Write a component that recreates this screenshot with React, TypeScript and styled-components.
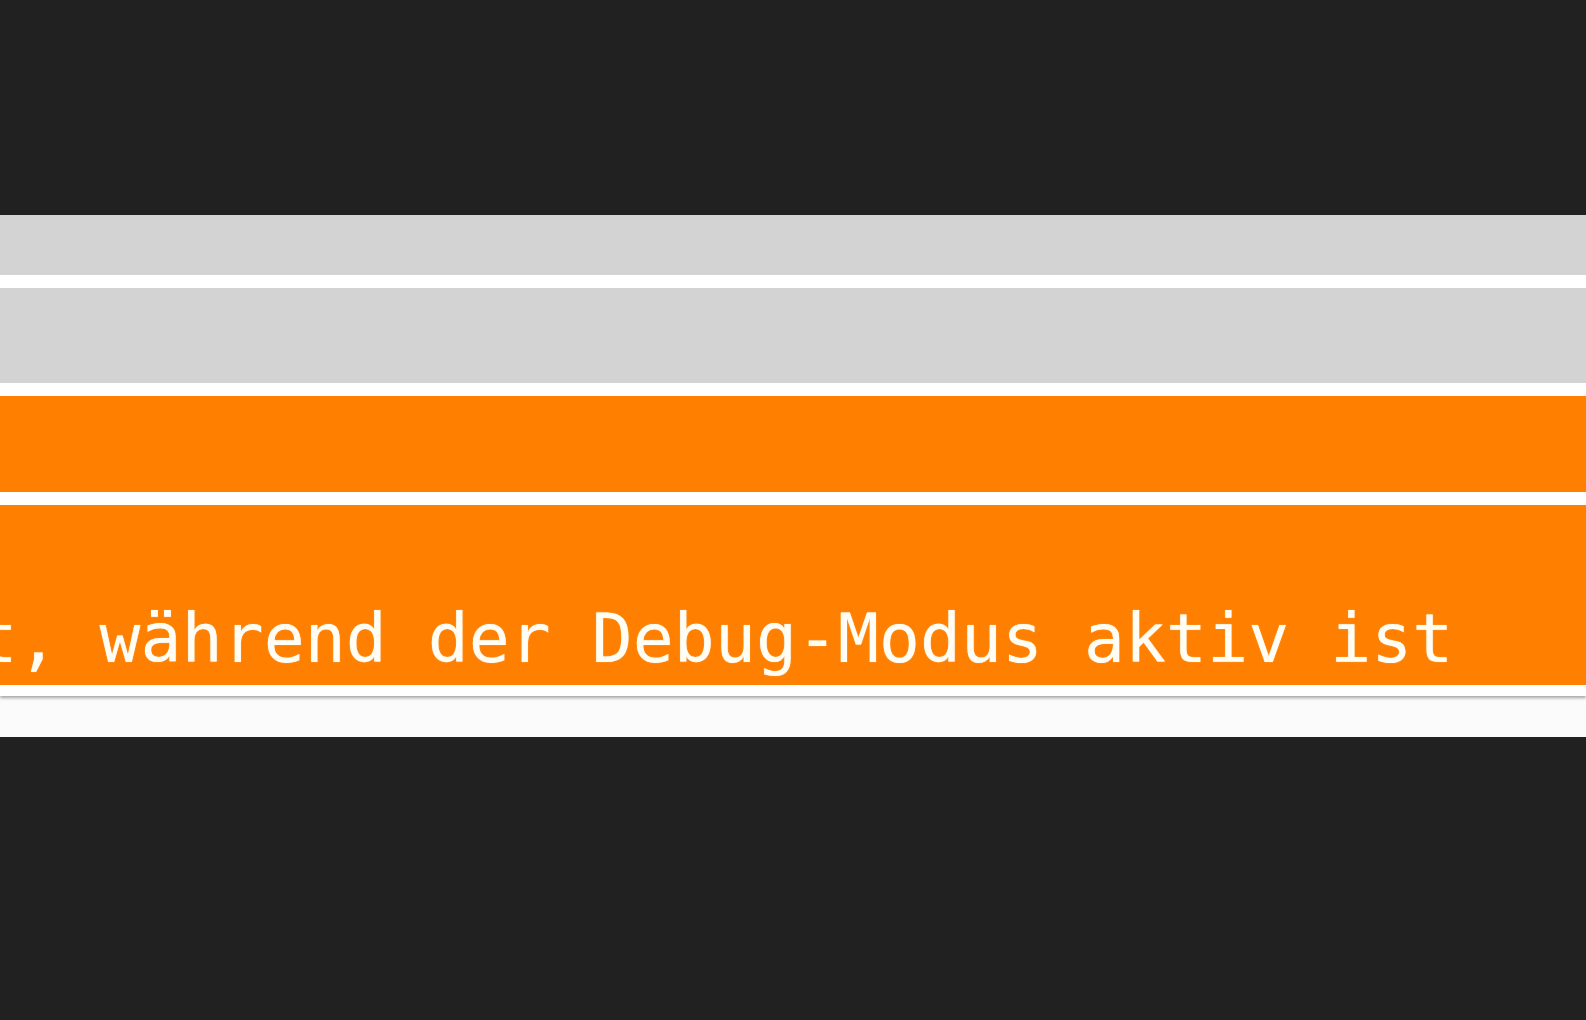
import styled, { createGlobalStyle } from "styled-components";

type Tone = "muted" | "warn";

interface RowProps {
  tone: Tone;
  h: number;
}

const GlobalStyle = createGlobalStyle`
  html, body {
    margin: 0;
    padding: 0;
    background-color: #212121;
    overflow: hidden;
  }
`;

const Page = styled.div`
  width: 1586px;
  height: 1020px;
  padding-top: 215px;
  box-sizing: border-box;
  background-color: #212121;
  display: flex;
  flex-direction: column;
`;

const Panel = styled.section`
  display: flex;
  flex-direction: column;
  background-color: #ffffff;
`;

const LogList = styled.div`
  position: relative;
  z-index: 1;
  display: flex;
  flex-direction: column;
  gap: 13px;
  padding-bottom: 11px;
  background-color: #ffffff;
  box-shadow: 0 2px 3px rgba(0, 0, 0, 0.35);
`;

const LogRow = styled.div<RowProps>`
  height: ${(props) => props.h}px;
  background-color: ${(props) => (props.tone === "warn" ? "#ff8000" : "#d3d3d3")};
  display: flex;
  align-items: flex-end;
  padding-bottom: 6px;
  box-sizing: border-box;
  overflow: hidden;
`;

const Message = styled.span`
  display: block;
  white-space: nowrap;
  text-indent: -1172px;
  font-family: "DejaVu Sans Mono", "Liberation Mono", monospace;
  font-size: 68px;
  letter-spacing: 0.08px;
  line-height: 80px;
  color: #fffdf4;
  text-shadow: 0 0 1px rgba(255, 255, 255, 0.7);
`;

const Footer = styled.div`
  height: 41px;
  background-color: #fbfbfb;
`;

const App = () => {
  return (
    <>
      <GlobalStyle />
      <Page>
        <Panel>
          <LogList>
            <LogRow tone="muted" h={60} />
            <LogRow tone="muted" h={95} />
            <LogRow tone="warn" h={96} />
            <LogRow tone="warn" h={180}>
              <Message>
                Das Speichern ist deaktiviert, während der Debug-Modus aktiv ist
              </Message>
            </LogRow>
          </LogList>
          <Footer />
        </Panel>
      </Page>
    </>
  );
};

export default App;
